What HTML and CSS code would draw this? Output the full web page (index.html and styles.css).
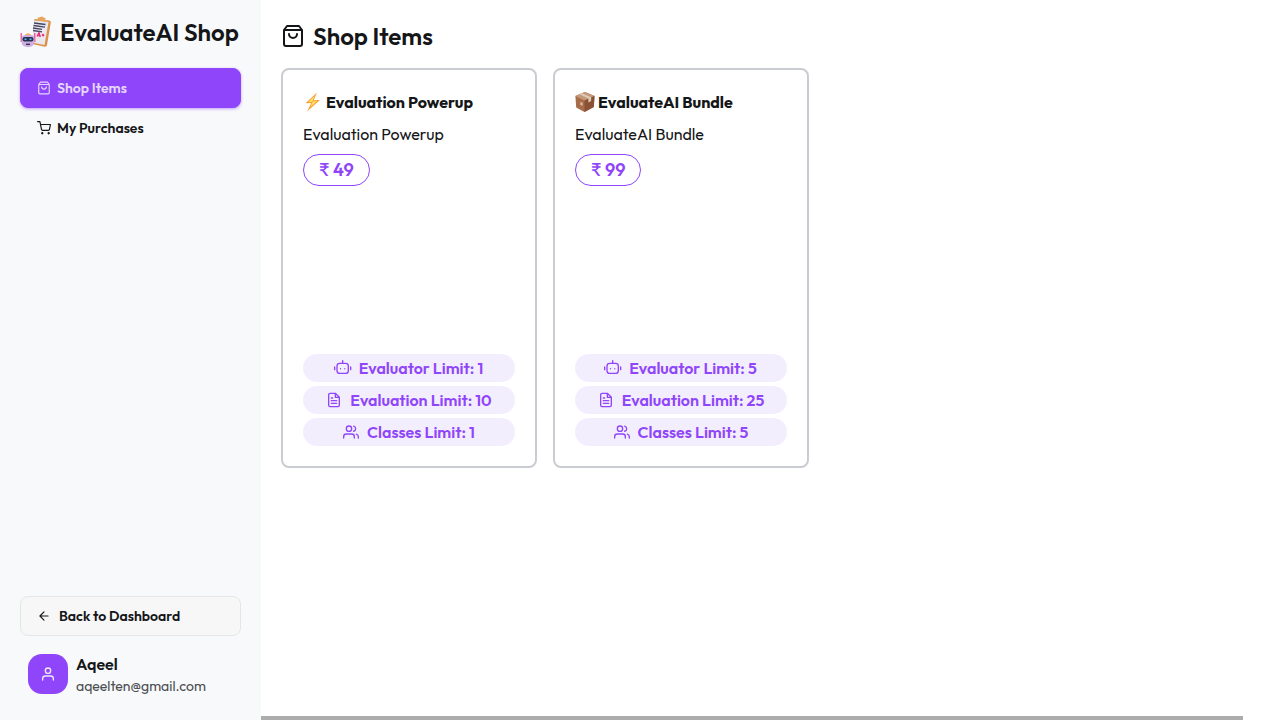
FILE: index.html
```html
<!DOCTYPE html>
<html lang="en">
<head>
<meta charset="utf-8">
<meta name="viewport" content="width=device-width, initial-scale=1">
<title>EvaluateAI Shop</title>
<link rel="stylesheet" href="styles.css">
</head>
<body>
<svg class="symbols" aria-hidden="true">
  <symbol id="bag" viewBox="0 0 24 24"><path d="M6 2 3 6v14a2 2 0 0 0 2 2h14a2 2 0 0 0 2-2V6l-3-4zM3 6h18M16 10a4 4 0 0 1-8 0"/></symbol>
  <symbol id="cart" viewBox="0 0 24 24"><circle cx="9" cy="21" r="1"/><circle cx="20" cy="21" r="1"/><path d="M1 1h4l2.700 13.400a2 2 0 0 0 2 1.600h9.700a2 2 0 0 0 2-1.600L23 6H6"/></symbol>
  <symbol id="arrow" viewBox="0 0 24 24"><path d="M19 12H5M12 19l-7-7 7-7"/></symbol>
  <symbol id="user" viewBox="0 0 24 24"><circle cx="12" cy="7" r="4"/><path d="M20 21v-2a4 4 0 0 0-4-4H8a4 4 0 0 0-4 4v2"/></symbol>
  <symbol id="bot" viewBox="0 0 24 24"><rect x="3" y="5" width="17" height="15" rx="4"/><path d="M11.500 5V1M-.5 10.500v4M23.500 10.500v4M8.300 13v.2M14.700 13v.2"/></symbol>
  <symbol id="file" viewBox="0 0 24 24"><path d="M14 2H6a2 2 0 0 0-2 2v16a2 2 0 0 0 2 2h12a2 2 0 0 0 2-2V8zM14 2v6h6M16 13H8M16 17H8M10 9H8"/></symbol>
  <symbol id="users" viewBox="0 0 24 24"><path d="M17 21v-2a4 4 0 0 0-4-4H5a4 4 0 0 0-4 4v2M23 21v-2a4 4 0 0 0-3-3.870M16 3.130a4 4 0 0 1 0 7.750"/><circle cx="9" cy="7" r="4"/></symbol>
  <symbol id="bolt" viewBox="0 0 20 20"><path d="M14 .5 2.500 11.300l5.800-.2L4 19.500 17 8l-6.300.3z" fill="#f9a233"/><path d="M11.500 4 5.500 10l4.300-.2-2.300 5 6.500-5.500-4.800.1z" fill="#ffe36b"/></symbol>
  <symbol id="box" viewBox="0 0 20 20"><path d="m10 0 9.500 4-.7 11L9.500 20 1.200 15.500.4 4z" fill="#a86c48"/><path d="m10 0 9.500 4-10 4.500L.4 4z" fill="#c4987a"/><path d="m9.500 8.500 10-4.500-.7 11-9.300 5z" fill="#8b5134"/><path d="m4.500 2.300 2.300-1 9.400 4-.1 3.800-2.700 1.300V6.500z" fill="#dfcbb9"/><path d="m5.500 10 2 .8v3l-2-.9z" fill="#dec6b4"/></symbol>
</svg>
<div class="layout">
  <aside class="sidebar">
    <div class="brand">
      <svg class="logo" viewBox="0 0 32 32" aria-hidden="true">
        <path d="m14.500 3 14.700 1.500q2 .3 1.600 2L27 29q-.4 2-2 1.700L12 28z" fill="#dc9148"/>
        <path d="m14.500 4.500 14 1.500-4 23L12 26.500z" fill="#e9e8ef"/>
        <path d="m17.500 4.500.5-3 2-.3q2-1.500 3.500.3l2 .5-.5 3.500z" fill="#e9a45b"/>
        <path d="m14 7 11.500 1.500M13.500 9.500l11.500 1.600M13 12l9 1.400M13 14.500l9 1.300" stroke="#414564" stroke-width="1.300"/>
        <path d="m17 20.500 2-4 1.300 4.500m-2.600-1.500 2 .3m2-.8 2.600.4m-1.100-1.500-.4 2.500" fill="none" stroke="#e72372" stroke-width="1.200"/>
        <path d="M1.200 17v9M14.800 17v9" stroke="#e72278" stroke-width="1"/>
        <path d="M4 19.700q4-5 8 0" fill="#f8aa43"/>
        <path d="M2 20q6-2.500 12 0l.5 6q-.5 5-6.500 5.200Q1.500 31 1.500 26z" fill="#cdb0e2"/>
        <rect x="2.500" y="21" width="11" height="4.500" rx="2" fill="#283352"/>
        <path d="M4.500 23.200h2M9.500 23.200h2" stroke="#59bced" stroke-width="1.600"/>
        <path d="M6 28.300h4" stroke="#41324f" stroke-width="1.400"/>
      </svg>
      <span class="brand-name">EvaluateAI Shop</span>
    </div>
    <nav class="nav">
      <button class="nav-item active" type="button"><svg class="icon small"><use href="#bag"/></svg>Shop Items</button>
      <button class="nav-item" type="button"><svg class="icon small"><use href="#cart"/></svg>My Purchases</button>
    </nav>
    <button class="back" type="button"><svg class="icon small"><use href="#arrow"/></svg>Back to Dashboard</button>
    <div class="profile">
      <span class="avatar"><svg class="icon"><use href="#user"/></svg></span>
      <div>
        <div class="profile-name">Aqeel</div>
        <div class="profile-email">aqeelten@gmail.com</div>
      </div>
    </div>
  </aside>
  <main class="main">
    <div class="content">
      <h1 class="heading"><svg class="icon large"><use href="#bag"/></svg>Shop Items</h1>
      <div class="cards">
        <article class="card">
          <h2 class="card-title"><svg class="emoji"><use href="#bolt"/></svg>Evaluation Powerup</h2>
          <p class="description">Evaluation Powerup</p>
          <span class="price">₹ 49</span>
          <ul class="limits">
            <li class="limit"><svg class="icon"><use href="#bot"/></svg>Evaluator Limit: 1</li>
            <li class="limit"><svg class="icon"><use href="#file"/></svg>Evaluation Limit: 10</li>
            <li class="limit"><svg class="icon"><use href="#users"/></svg>Classes Limit: 1</li>
          </ul>
        </article>
        <article class="card">
          <h2 class="card-title"><svg class="emoji"><use href="#box"/></svg>EvaluateAI Bundle</h2>
          <p class="description">EvaluateAI Bundle</p>
          <span class="price">₹ 99</span>
          <ul class="limits">
            <li class="limit"><svg class="icon"><use href="#bot"/></svg>Evaluator Limit: 5</li>
            <li class="limit"><svg class="icon"><use href="#file"/></svg>Evaluation Limit: 25</li>
            <li class="limit"><svg class="icon"><use href="#users"/></svg>Classes Limit: 5</li>
          </ul>
        </article>
      </div>
    </div>
    <div class="scroll-thumb"></div>
  </main>
</div>
</body>
</html>
```
FILE: styles.css
```css
* { box-sizing: border-box; }
body {
  margin: 0;
  background: #fff;
  color: #151618;
  font: 400 16px/24px Outfit, Lato, "Liberation Sans", sans-serif;
}
button { font: inherit; color: inherit; cursor: pointer; }
h1, h2, p, ul { margin: 0; padding: 0; }
.symbols { position: absolute; width: 0; height: 0; }
.icon {
  flex: none;
  width: 16px;
  height: 16px;
  overflow: visible;
  fill: none;
  stroke: currentColor;
  stroke-width: 2;
  stroke-linecap: round;
  stroke-linejoin: round;
}
symbol { overflow: visible; }
.small { width: 14px; height: 14px; }
.large { width: 24px; height: 24px; }
.layout { display: flex; min-height: 100vh; }
.sidebar {
  display: flex;
  flex: none;
  flex-direction: column;
  width: 261px;
  padding: 16px 20px 24px;
  background: #f8f9fb;
}
.brand { display: flex; align-items: center; gap: 8px; height: 32px; }
.logo { flex: none; width: 32px; height: 32px; }
.brand-name { font-size: 24px; font-weight: 600; line-height: 32px; white-space: nowrap; }
.nav { display: flex; flex-direction: column; margin-top: 20px; }
.nav-item, .back {
  display: flex;
  align-items: center;
  gap: 6px;
  height: 40px;
  padding: 0 16px;
  border: 1px solid transparent;
  border-radius: 8px;
  background: none;
  font-size: 14px;
  font-weight: 600;
}
.active { border-color: #8f45f9; background: #8f45f9; color: #e4d6fe; box-shadow: 0 1px 3px #8f45f980; }
.back { gap: 8px; margin-top: auto; border-color: #e5e6e6; background: #f7f7f7; }
.profile { display: flex; align-items: center; gap: 8px; padding: 16px 8px 0; }
.avatar {
  display: grid;
  place-items: center;
  width: 40px;
  height: 40px;
  border-radius: 14px;
  background: #8f45f9;
  color: #f1e8ff;
}
.profile-name { font-weight: 600; line-height: 24px; }
.profile-email { color: #4b4d50; font-size: 14px; line-height: 20px; }
.main { display: flex; flex: 1; flex-direction: column; min-width: 0; }
.content { flex: 1; padding: 20px; }
.heading { display: flex; align-items: center; gap: 8px; font-size: 24px; font-weight: 600; line-height: 32px; }
.cards { display: flex; flex-wrap: wrap; gap: 16px; margin-top: 16px; }
.card {
  display: flex;
  flex-direction: column;
  align-items: flex-start;
  width: 256px;
  min-height: 400px;
  padding: 20px;
  border: 2px solid #c9cdd2;
  border-radius: 8px;
}
.card-title { display: flex; align-items: center; gap: 3px; font-size: 16px; line-height: 24px; }
.emoji { width: 20px; height: 20px; }
.description { margin-top: 8px; }
.price {
  margin-top: 8px;
  padding: 0 15px;
  border: 1px solid #8f45f9;
  border-radius: 16px;
  color: #8f45f9;
  font-size: 18px;
  font-weight: 600;
  line-height: 30px;
}
.limits { display: flex; flex-direction: column; gap: 4px; width: 100%; margin-top: auto; list-style: none; }
.limit {
  display: flex;
  align-items: center;
  justify-content: center;
  gap: 8px;
  border-radius: 14px;
  background: #f3eefe;
  color: #8f45f9;
  font-weight: 600;
  line-height: 28px;
}
.scroll-thumb { height: 4px; margin-right: 27px; background: #acacac; }
```
